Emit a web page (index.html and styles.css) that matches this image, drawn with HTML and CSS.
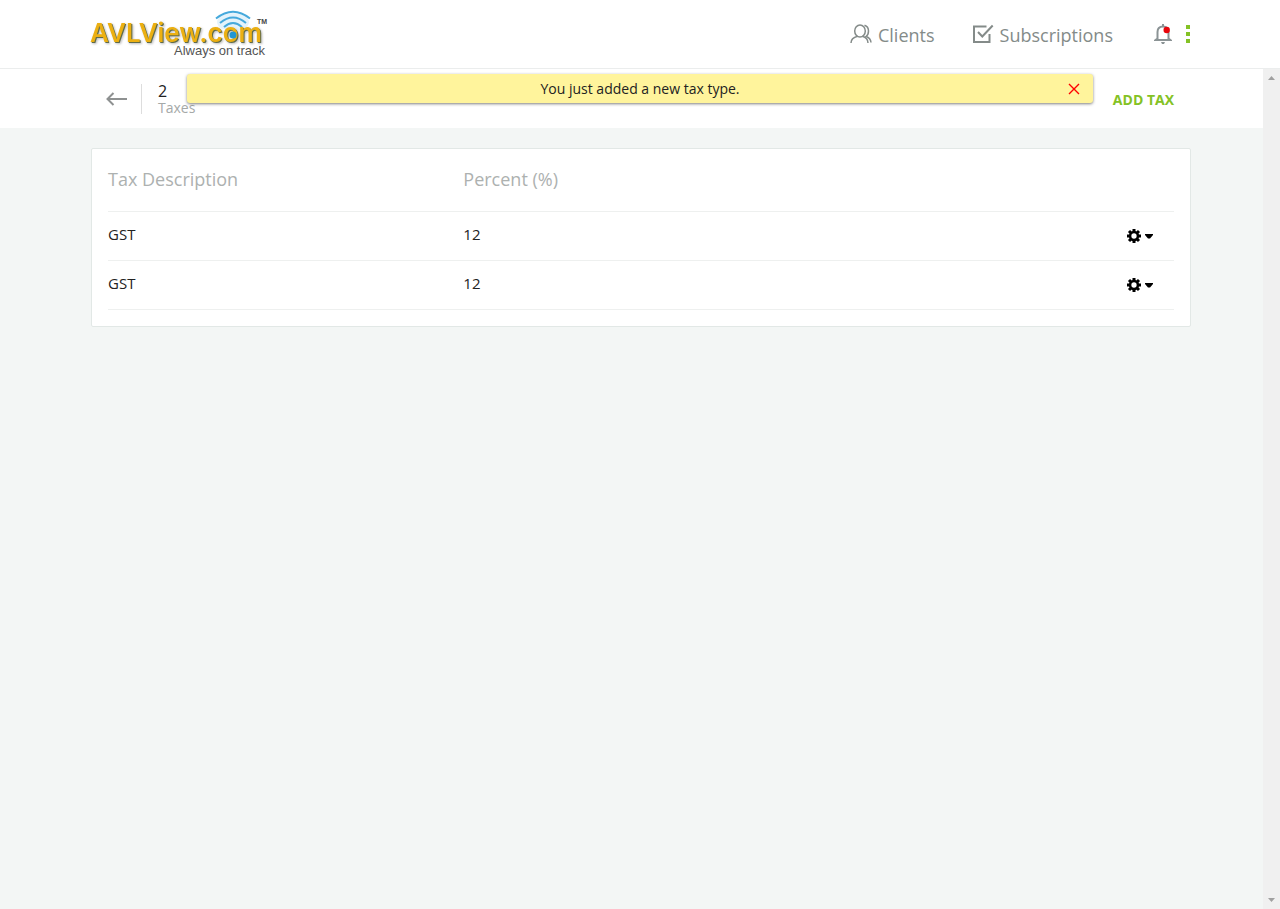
FILE: index.html
```html
<!DOCTYPE html>
<html lang="en">
<head>
<meta charset="utf-8">
<title>Taxes</title>
<link rel="stylesheet" href="styles.css">
</head>
<body>
<header class="topbar">
  <div class="container topbar-inner">
    <a class="logo" href="#" aria-label="AVLView.com, Always on track">
      <svg width="182" height="56" viewBox="0 0 182 56">
        <ellipse cx="143" cy="16" rx="16" ry="9" class="logo-glow"/>
        <g class="logo-waves">
          <path d="M126 12.500Q143 -1 160 12.500"/>
          <path d="M130 17Q143 6 156 17"/>
          <path d="M134 21Q143 13 152 21"/>
        </g>
        <text x="0" y="36" class="logo-name">AVLView.com</text>
        <circle cx="143" cy="29" r="3.500" class="logo-dot"/>
        <text x="167" y="18" class="logo-tm">TM</text>
        <text x="84" y="49" class="logo-tag">Always on track</text>
      </svg>
    </a>
    <nav class="nav">
      <a class="nav-link" href="#">
        <svg width="22" height="20" viewBox="0 0 22 20" class="line-icon">
          <ellipse cx="10" cy="7" rx="5.300" ry="6"/>
          <path d="M1 19C1 15 3.500 13.300 7.500 12.300M12.500 12.300C15.500 13.300 18 15 18 19"/>
          <path d="M14.500 1.200C17 2 18.500 4.100 18.500 7C18.500 9.500 17.500 11.500 16 12.500C19 13.500 20.800 15.500 21 18.500"/>
        </svg>
        <span>Clients</span>
      </a>
      <a class="nav-link" href="#">
        <svg width="21" height="20" viewBox="0 0 21 20" class="box-icon">
          <path d="M13.500 2.500H1V18H16.500V10"/>
          <path d="M5 8L9.300 12.500L19.700 1.500"/>
        </svg>
        <span>Subscriptions</span>
      </a>
    </nav>
    <div class="actions">
      <button class="icon-button" aria-label="Notifications">
        <svg width="18" height="20" viewBox="0 0 18 20">
          <path d="M3.500 14.500V8C3.500 4.500 5.500 2.500 9 2.500S14.500 4.500 14.500 8V14.500L16.500 16H1.500Z" class="bell"/>
          <path d="M8 0H10V3H8ZM7 18H11L10 20H8Z" class="bell-fill"/>
          <circle cx="12.700" cy="6" r="3.200" class="alert-dot"/>
        </svg>
      </button>
      <button class="icon-button" aria-label="More">
        <svg width="4" height="18" viewBox="0 0 4 18">
          <path d="M0 0H4V4H0ZM0 7H4V11H0ZM0 14H4V18H0Z" class="dots"/>
        </svg>
      </button>
    </div>
  </div>
</header>
<main class="page">
  <section class="subbar">
    <div class="container subbar-inner">
      <a class="back" href="#" aria-label="Back">
        <svg width="21" height="14" viewBox="0 0 21 14"><path d="M21 7H1.500M7.500 1L1.500 7L7.500 13"/></svg>
      </a>
      <div class="summary">
        <span class="count">2</span>
        <span class="unit">Taxes</span>
      </div>
      <button class="add">ADD TAX</button>
    </div>
  </section>
  <div class="toast" role="status">
    <span>You just added a new tax type.</span>
    <button class="close" aria-label="Close">
      <svg width="12" height="12" viewBox="0 0 12 12"><path d="M1 1L11 11M11 1L1 11"/></svg>
    </button>
  </div>
  <section class="container card">
    <table class="taxes">
      <thead>
        <tr><th>Tax Description</th><th>Percent (%)</th><th></th></tr>
      </thead>
      <tbody>
        <tr>
          <td>GST</td><td>12</td>
          <td class="tools"><button class="icon-button" aria-label="Options">
            <svg width="27" height="14" viewBox="0 0 27 14">
              <path d="M7 0V14M0 7H14M2 2L12 12M12 2L2 12" class="gear-teeth"/>
              <circle cx="7" cy="7" r="3.900" class="gear-ring"/>
              <path d="M18 5H26V6L23 9.500H21L18 6Z" class="caret"/>
            </svg>
          </button></td>
        </tr>
        <tr>
          <td>GST</td><td>12</td>
          <td class="tools"><button class="icon-button" aria-label="Options">
            <svg width="27" height="14" viewBox="0 0 27 14">
              <path d="M7 0V14M0 7H14M2 2L12 12M12 2L2 12" class="gear-teeth"/>
              <circle cx="7" cy="7" r="3.900" class="gear-ring"/>
              <path d="M18 5H26V6L23 9.500H21L18 6Z" class="caret"/>
            </svg>
          </button></td>
        </tr>
      </tbody>
    </table>
  </section>
  <div class="scrollbar" aria-hidden="true">
    <svg width="7" height="4" viewBox="0 0 7 4"><path d="M0 4L3.500 0L7 4Z"/></svg>
    <svg width="7" height="4" viewBox="0 0 7 4"><path d="M0 0L3.500 4L7 0Z"/></svg>
  </div>
</main>
</body>
</html>
```
FILE: styles.css
```css
* { box-sizing: border-box; }

body {
  margin: 0;
  min-height: 100vh;
  display: flex;
  flex-direction: column;
  background: #f3f6f5;
  color: #222;
  font-family: "Open Sans", sans-serif;
  font-size: 15px;
  line-height: 24px;
}

a { color: inherit; text-decoration: none; }
svg { display: block; fill: none; }
button { margin: 0; padding: 0; border: 0; background: none; font: inherit; cursor: pointer; }

.container { width: 100%; max-width: 1100px; margin: 0 auto; }

.topbar {
  background: #fff;
  border-bottom: 1px solid #ebeded;
}
.topbar-inner { display: flex; align-items: center; height: 68px; }
.logo { margin-right: auto; }
.logo svg { overflow: visible; }
.logo-name {
  font: 600 26px Inter, sans-serif;
  fill: #ecb012;
  filter: drop-shadow(1px 1px 0 #5f6b4a) drop-shadow(1px 1px 1px #bbb);
}
.logo-waves { stroke: #46a9dc; stroke-width: 2; }
.logo-glow { fill: #e4f3fb; }
.logo-dot { fill: #2196d3; }
.logo-tm { font: 700 7px "Liberation Sans", sans-serif; fill: #444; }
.logo-tag { font: 13px "Liberation Sans", sans-serif; fill: #555; }

.nav { display: flex; gap: 38px; }
.nav-link {
  display: flex;
  align-items: center;
  gap: 6px;
  font-size: 18px;
  color: #848b89;
}
.nav-link span { padding-top: 2px; }
.line-icon { stroke: #848b89; stroke-width: 1.5; }
.box-icon { stroke: #848b89; stroke-width: 2; }
.actions { display: flex; align-items: center; gap: 14px; margin-left: 41px; }
.icon-button { display: block; }
.bell { stroke: #8b9395; stroke-width: 2; }
.bell-fill { fill: #8b9395; }
.alert-dot { fill: #e8060c; }
.dots { fill: #84c225; }

.page { position: relative; flex: 1; padding-left: 2px; }
.subbar { background: #fff; margin-left: -2px; padding-left: 2px; }
.subbar-inner {
  display: flex;
  align-items: center;
  min-height: 59px;
  padding: 0 17px 0 15px;
}
.back { padding-right: 14px; }
.back svg { stroke: #8e9191; stroke-width: 2; }
.summary {
  display: flex;
  flex-direction: column;
  height: 30px;
  border-left: 1px solid #ddd;
  padding-left: 16px;
}
.count { font-size: 16px; line-height: 14px; }
.unit { font-size: 14px; line-height: 20px; color: #a5a9a8; }
.add { margin-left: auto; padding-top: 2px; font-size: 14px; font-weight: 700; color: #84c225; }

.toast {
  position: absolute;
  top: 5px;
  left: 187px;
  right: 187px;
  height: 29px;
  display: flex;
  align-items: center;
  justify-content: center;
  border-radius: 3px;
  background: #fff49c;
  box-shadow: 0 1px 3px rgba(0, 0, 0, 0.5);
  font-size: 14px;
}
.close { position: absolute; right: 13px; }
.close svg { stroke: #f00; stroke-width: 1.4; }

.card {
  margin-top: 20px;
  padding: 16px;
  background: #fff;
  border: 1px solid #e2e8e6;
  border-radius: 2px;
}
.taxes { width: 100%; border-collapse: collapse; table-layout: fixed; }
.taxes th {
  padding: 0 0 18px;
  border-bottom: 1px solid #eef0ef;
  font-size: 18px;
  font-weight: 400;
  line-height: 28px;
  text-align: left;
  color: #adb1b0;
}
.taxes td { padding: 10px 0 14px; border-bottom: 1px solid #eef0ef; }
.taxes .tools { padding: 12px 20px 12px 0; }
.tools .icon-button { margin-left: auto; }
.gear-teeth { stroke: #000; stroke-width: 3; }
.gear-ring { stroke: #000; stroke-width: 2.5; fill: #fff; }
.caret { fill: #000; }

.scrollbar {
  position: absolute;
  top: 0;
  right: 0;
  bottom: 0;
  width: 17px;
  display: flex;
  flex-direction: column;
  align-items: center;
  justify-content: space-between;
  padding: 7px 0;
  background: #f0f0f0;
}
.scrollbar svg { fill: #a0a0a0; }
```
